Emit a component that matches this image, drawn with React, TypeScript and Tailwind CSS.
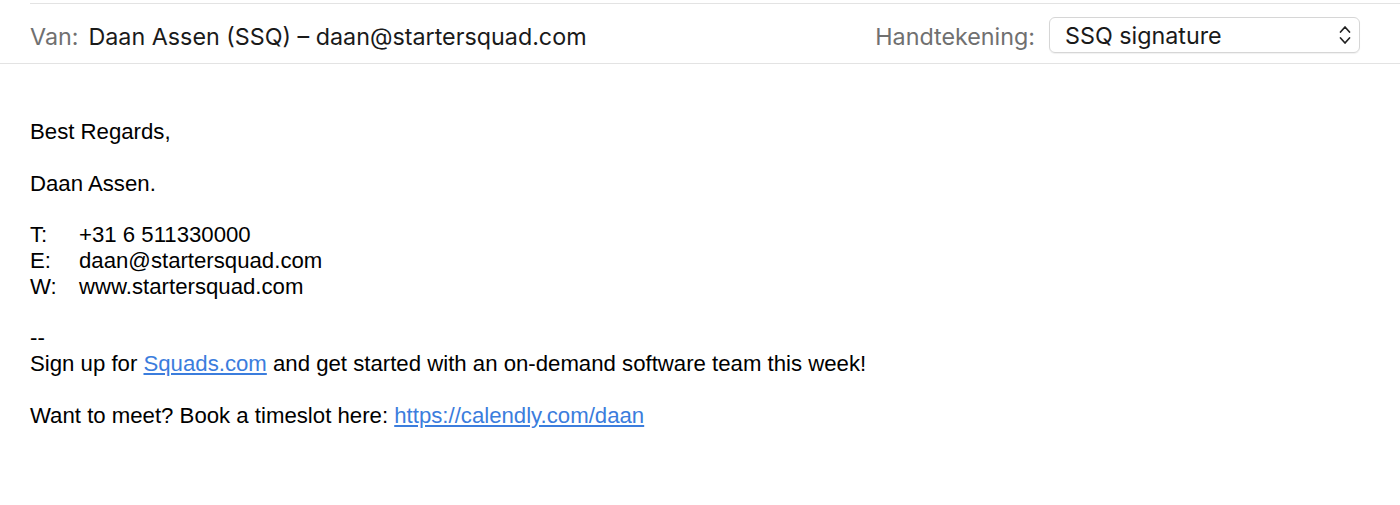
import React from "react";

export default function App() {
  const body = { fontFamily: '"Liberation Sans", Arial, sans-serif' };
  const ui = { fontFamily: 'Inter, "Liberation Sans", sans-serif' };
  return (
    <div className="w-[1400px] h-[505px] bg-white overflow-hidden">
      <div className="pt-[3px]">
        <div className="ml-[30px] border-t border-[#e3e3e3]" />
      </div>
      <div className="h-[60px] pt-[3px] flex items-center justify-between pl-[30px] pr-[40px] border-b border-[#e3e3e3]" style={ui}>
        <div className="text-[23.3px] flex items-center pt-[4px]">
          <span className="text-[#707070]">Van:</span>
          <span className="ml-[10px] text-[#1a1a1a]">Daan Assen (SSQ) – daan@startersquad.com</span>
        </div>
        <div className="flex items-center">
          <span className="text-[23.3px] text-[#707070] pt-[4px]">Handtekening:</span>
          <div className="ml-[14px] w-[311px] h-[36px] rounded-[6px] border border-[#d6d6d6] flex items-center justify-between pl-[15px] pr-[7px] shadow-[0_1px_1px_rgba(0,0,0,0.06)]">
            <span className="text-[23.3px] text-[#1a1a1a] pt-[2px]">SSQ signature</span>
            <svg width="14" height="22" viewBox="0 0 14 22" fill="none" stroke="#222" strokeWidth="1.7" strokeLinecap="round" strokeLinejoin="round">
              <path d="M2.5 8 L7 3 L11.5 8" />
              <path d="M2.5 14 L7 19 L11.5 14" />
            </svg>
          </div>
        </div>
      </div>
      <div className="pl-[30px] pt-[55px] text-[22.2px] leading-[25.8px] text-black" style={body}>
        <div>Best Regards,</div>
        <div className="h-[25.8px]" />
        <div>Daan Assen.</div>
        <div className="h-[25.8px]" />
        <div className="grid grid-cols-[49px_1fr]">
          <span>T:</span><span>+31 6 511330000</span>
          <span>E:</span><span>daan@startersquad.com</span>
          <span>W:</span><span>www.startersquad.com</span>
        </div>
        <div className="h-[25.8px]" />
        <div>--</div>
        <div>
          Sign up for <a className="text-[#3b7ddd] underline">Squads.com</a> and get started with an on-demand software team this week!
        </div>
        <div className="h-[25.8px]" />
        <div>
          Want to meet? Book a timeslot here: <a className="text-[#3b7ddd] underline">https://calendly.com/daan</a>
        </div>
      </div>
    </div>
  );
}
